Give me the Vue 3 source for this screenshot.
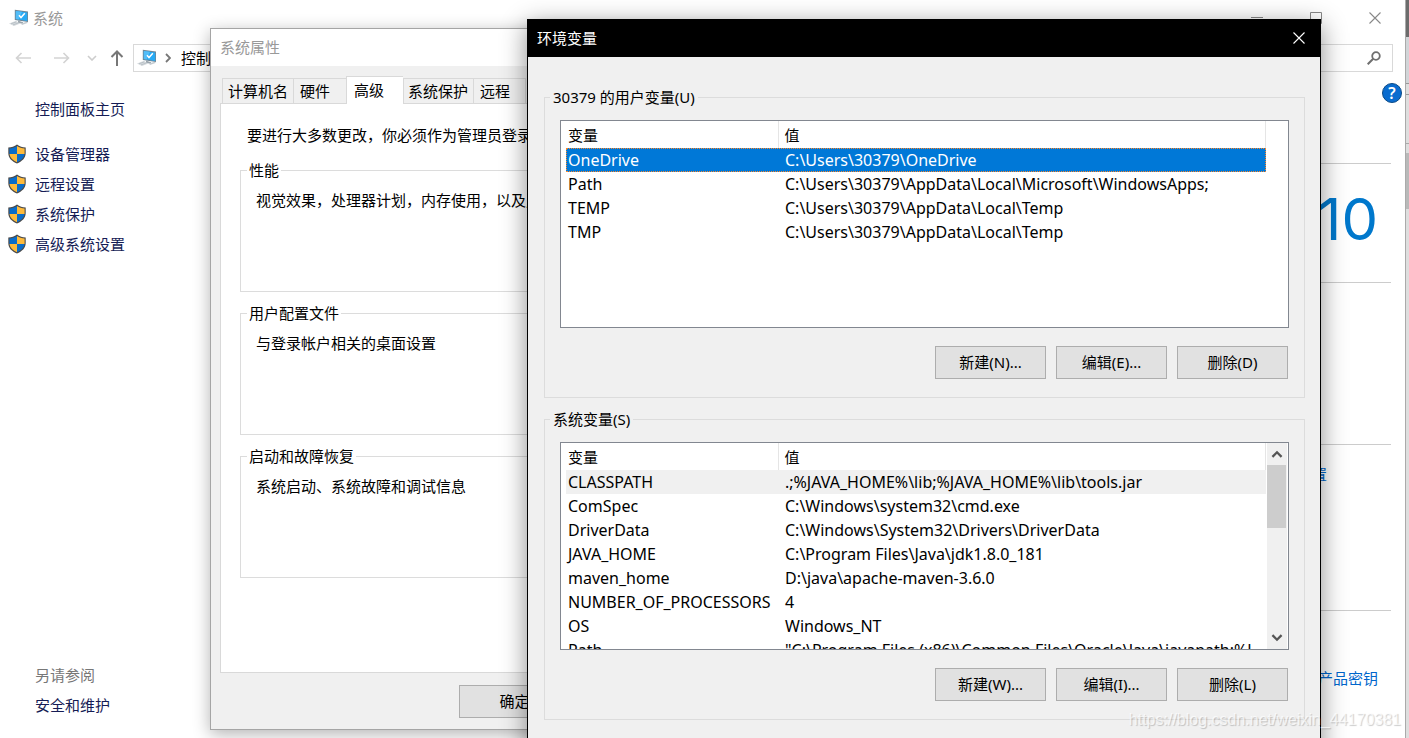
<script setup>
const tasks = ['设备管理器', '远程设置', '系统保护', '高级系统设置']

const tabs = [
  { label: '计算机名', size: 'wide' },
  { label: '硬件', size: 'narrow' },
  { label: '高级', size: 'active' },
  { label: '系统保护', size: 'wide' },
  { label: '远程', size: 'narrow' },
]

const settings = [
  { title: '性能', text: '视觉效果，处理器计划，内存使用，以及虚' },
  { title: '用户配置文件', text: '与登录帐户相关的桌面设置' },
  { title: '启动和故障恢复', text: '系统启动、系统故障和调试信息' },
]

const groups = [
  {
    title: '30379 的用户变量(U)',
    scroll: false,
    rows: [
      { name: 'OneDrive', value: 'C:\\Users\\30379\\OneDrive', state: 'selected' },
      { name: 'Path', value: 'C:\\Users\\30379\\AppData\\Local\\Microsoft\\WindowsApps;' },
      { name: 'TEMP', value: 'C:\\Users\\30379\\AppData\\Local\\Temp' },
      { name: 'TMP', value: 'C:\\Users\\30379\\AppData\\Local\\Temp' },
    ],
    buttons: ['新建(N)...', '编辑(E)...', '删除(D)'],
  },
  {
    title: '系统变量(S)',
    scroll: true,
    rows: [
      { name: 'CLASSPATH', value: '.;%JAVA_HOME%\\lib;%JAVA_HOME%\\lib\\tools.jar', state: 'muted' },
      { name: 'ComSpec', value: 'C:\\Windows\\system32\\cmd.exe' },
      { name: 'DriverData', value: 'C:\\Windows\\System32\\Drivers\\DriverData' },
      { name: 'JAVA_HOME', value: 'C:\\Program Files\\Java\\jdk1.8.0_181' },
      { name: 'maven_home', value: 'D:\\java\\apache-maven-3.6.0' },
      { name: 'NUMBER_OF_PROCESSORS', value: '4' },
      { name: 'OS', value: 'Windows_NT' },
      { name: 'Path', value: '"C:\\Program Files (x86)\\Common Files\\Oracle\\Java\\javapath;%J...' },
    ],
    buttons: ['新建(W)...', '编辑(I)...', '删除(L)'],
  },
]
</script>

<template>
  <div class="desktop">
    <svg class="defs" aria-hidden="true">
      <symbol id="pc" viewBox="0 0 20 18">
        <path d="M0 14.500 6.500 12 12 14.300 5 17z" fill="#d5dade" />
        <path d="M2 14.800 7.500 12.800M4 15.900 9.500 13.900" stroke="#aeb6bc" stroke-width=".7" />
        <path d="M9 11.500 14 13.200 14 15 9 13.500z" fill="#9aa5ad" />
        <path d="M12 14.500 18.500 12.500 18.500 14 13 16z" fill="#c5ccd1" />
        <path d="M5.800.800 19 2.500 19 13 5.800 11z" fill="#6f8797" />
        <path d="M6.800 1.900 18.200 3.400 18.200 12 6.800 10.100z" fill="#27aaf5" />
        <path d="M6.800 1.900 13 2.800 9.500 10.500 6.800 10.100z" fill="#52bdf8" />
        <path d="m10 6.300 2 2.300 3.800-4.300" fill="none" stroke="#fff" stroke-width="1.500" />
      </symbol>
      <symbol id="shield" viewBox="0 0 20 20">
        <path d="M10 .600C7.500 2.800 4.500 3.300 1.300 3.400V9C1.300 14 5 17.500 10 19.500 15 17.500 18.700 14 18.700 9V3.400C15.500 3.300 12.500 2.800 10 .600z" fill="#4a4a4a" />
        <path d="M10 2.100V10H2.400V4.500C5.300 4.300 7.800 3.700 10 2.100z" fill="#0a6dcb" />
        <path d="M10 2.100V10H17.600V4.500C14.700 4.300 12.200 3.700 10 2.100z" fill="#ffbb3c" />
        <path d="M10 10V18.200C6 16.500 3 13.800 2.500 10z" fill="#ffbb3c" />
        <path d="M10 10V18.200C14 16.500 17 13.800 17.500 10z" fill="#0a6dcb" />
      </symbol>
      <symbol id="close" viewBox="0 0 12 12">
        <path d="M.500.500 11.500 11.500M11.500.500.500 11.500" fill="none" stroke="currentColor" stroke-width="1.100" />
      </symbol>
    </svg>

    <div class="system">
      <header class="titlebar">
        <svg class="pc"><use href="#pc" /></svg>
        <span>系统</span>
        <div class="controls">
          <button aria-label="最小化"><svg viewBox="0 0 12 12"><path d="M0 5.500H12" stroke="currentColor" /></svg></button>
          <button aria-label="最大化"><svg viewBox="0 0 12 12"><path d="M.500.500H11.500V11.500H.500z" fill="none" stroke="currentColor" /></svg></button>
          <button aria-label="关闭"><svg><use href="#close" /></svg></button>
        </div>
      </header>

      <nav class="navbar">
        <button class="nav-btn" aria-label="后退"><svg width="16" height="12" viewBox="0 0 16 12"><path d="M16 6H1.500M6.500 1 1.500 6 6.500 11" fill="none" stroke="#d3d3d3" stroke-width="1.600" /></svg></button>
        <button class="nav-btn" aria-label="前进"><svg width="16" height="12" viewBox="0 0 16 12"><path d="M0 6H14.500M9.500 1 14.500 6 9.500 11" fill="none" stroke="#d3d3d3" stroke-width="1.600" /></svg></button>
        <button class="nav-btn recent" aria-label="最近位置"><svg width="10" height="6" viewBox="0 0 10 6"><path d="M1 1 5 5 9 1" fill="none" stroke="#cdcdcd" stroke-width="1.600" /></svg></button>
        <button class="nav-btn up" aria-label="上移"><svg width="14" height="16" viewBox="0 0 14 16"><path d="M7 16V1.500M1.500 7 7 1.500 12.500 7" fill="none" stroke="#777" stroke-width="2" /></svg></button>
        <div class="address">
          <svg class="pc"><use href="#pc" /></svg>
          <svg class="crumb" width="6" height="10" viewBox="0 0 6 10"><path d="M1 1 5 5 1 9" fill="none" stroke="#777" stroke-width="1.800" /></svg>
          <span>控制</span>
        </div>
        <div class="search">
          <input type="text" aria-label="搜索" />
          <svg width="14" height="14" viewBox="0 0 14 14"><circle cx="9" cy="5" r="3.800" fill="none" stroke="#6f6f6f" stroke-width="1.800" /><path d="M6.200 7.800.700 13.300" stroke="#6f6f6f" stroke-width="2" /></svg>
        </div>
      </nav>

      <div class="body">
        <aside class="sidebar">
          <a href="#" class="home">控制面板主页</a>
          <a v-for="t in tasks" :key="t" href="#"><svg><use href="#shield" /></svg>{{ t }}</a>
          <p class="also">另请参阅</p>
          <a href="#" class="plain">安全和维护</a>
        </aside>
        <main class="info">
          <div class="help"><button aria-label="帮助">?</button></div>
          <section class="brand">10</section>
          <section class="specs"></section>
          <section class="name"><a href="#">置</a></section>
          <section class="activation"><a href="#">产品密钥</a></section>
        </main>
      </div>
    </div>

    <div class="behind"><i class="dark"></i><i class="bar"></i><i class="row"></i><i class="gap"></i><i class="thumb"></i></div>

    <div class="props">
      <header>系统属性</header>
      <div class="tabs" role="tablist">
        <button v-for="t in tabs" :key="t.label" role="tab" :class="t.size">{{ t.label }}</button>
      </div>
      <div class="panel">
        <p>要进行大多数更改，你必须作为管理员登录</p>
        <fieldset v-for="s in settings" :key="s.title">
          <legend>{{ s.title }}</legend>
          {{ s.text }}
        </fieldset>
      </div>
      <footer><button class="btn">确定</button></footer>
    </div>

    <div class="env">
      <header>
        <span>环境变量</span>
        <button aria-label="关闭"><svg><use href="#close" /></svg></button>
      </header>
      <div class="groups">
        <fieldset v-for="g in groups" :key="g.title">
          <legend>{{ g.title }}</legend>
          <div class="list">
            <table>
              <thead><tr><th class="key">变量</th><th>值</th></tr></thead>
              <tbody>
                <tr v-for="r in g.rows" :key="r.name" :class="r.state"><td>{{ r.name }}</td><td>{{ r.value }}</td></tr>
              </tbody>
            </table>
            <div v-if="g.scroll" class="scrollbar">
              <button aria-label="向上滚动"><svg viewBox="0 0 10 7"><path d="M1 6 5 2 9 6" /></svg></button>
              <div class="thumb"></div>
              <button aria-label="向下滚动"><svg viewBox="0 0 10 7"><path d="M1 1 5 5 9 1" /></svg></button>
            </div>
          </div>
          <div class="actions"><button v-for="b in g.buttons" :key="b" class="btn">{{ b }}</button></div>
        </fieldset>
      </div>
    </div>

    <div class="watermark">https://blog.csdn.net/weixin_44170381</div>
  </div>
</template>

<style>
body { margin: 0; overflow: hidden; }
</style>

<style scoped>
.desktop {
  position: relative;
  display: flex;
  height: 100vh;
  overflow: hidden;
  background: #fff;
  color: #000;
  font: 15px/20px "Noto Sans", "Noto Sans CJK SC", sans-serif;
}
.desktop * { box-sizing: border-box; }
button { padding: 0; border: 0; background: none; font: inherit; color: inherit; }
a { text-decoration: none; }
p { margin: 0; }
svg { flex: none; }
.defs { position: absolute; width: 0; height: 0; }
.pc { width: 20px; height: 18px; }

.system { flex: 1; min-width: 0; display: flex; flex-direction: column; background: #fff; }
.titlebar { display: flex; align-items: center; height: 36px; padding: 0 1px 0 9px; gap: 4px; color: #999; }
.controls { display: flex; margin-left: auto; color: #888; }
.controls button { display: flex; align-items: center; justify-content: center; width: 59px; height: 36px; }
.controls svg { width: 12px; height: 12px; }
.navbar { display: flex; padding: 8px 12px 7px 3px; }
.nav-btn { display: flex; align-items: center; justify-content: center; width: 39px; height: 28px; }
.nav-btn.recent { width: 22px; }
.nav-btn.up { width: 28px; }
.address { flex: 1; display: flex; align-items: center; border: 1px solid #d9d9d9; padding-left: 3px; margin-left: 2px; }
.crumb { margin: 0 10px 0 8px; }
.search { display: flex; align-items: center; width: 280px; margin-left: 12px; padding-right: 11px; border: 1px solid #d9d9d9; }
.search input { flex: 1; min-width: 0; height: 20px; border: 0; outline: 0; background: none; font: inherit; }

.body { flex: 1; display: flex; }
.sidebar { display: flex; flex-direction: column; width: 210px; padding: 15px 0 18px 7px; line-height: 30px; }
.sidebar a { display: flex; align-items: center; gap: 8px; color: #151c55; }
.sidebar svg { width: 20px; height: 20px; }
.sidebar .home { margin-bottom: 15px; padding-left: 28px; }
.sidebar .also { margin-top: auto; padding-left: 28px; color: #777; }
.sidebar .plain { padding-left: 28px; }
.info { flex: 1; padding-right: 14px; }
.info section { display: flex; justify-content: flex-end; border-top: 1px solid #ccc; }
.info a { color: #0066cc; }
.help { display: flex; justify-content: flex-end; height: 84px; padding-top: 4px; margin-right: -11px; }
.help button { width: 20px; height: 20px; border: 1px solid #0b4a86; border-radius: 50%; background: #0a6ccf; color: #fff; font-size: 16px; font-weight: 600; line-height: 18px; }
.info .brand { align-items: center; height: 119px; padding: 0 13px 8px 0; color: #0078cc; font: 400 58px/80px Inter, sans-serif; }
.specs { height: 162px; }
.info .name { height: 166px; padding: 19px 64px 0 0; }
.info .activation { padding: 57px 13px 0 0; }

.behind { display: flex; flex-direction: column; width: 4px; border-left: 1px solid #aaa; background: #dedede; }
.behind .dark { height: 37px; background: #6c6c6c; }
.behind .bar { height: 46px; background: #d2d5d8; }
.behind .row { height: 12px; border: solid #999; border-width: 1px 0; }
.behind .gap { height: 49px; border-bottom: 1px solid #aaa; }
.behind .thumb { height: 56px; margin-top: 9px; background: #b9b9b9; }

.props {
  position: absolute;
  top: 28px;
  left: 210px;
  width: 540px;
  border: 1px solid #a5a5a5;
  background: #f0f0f0;
  box-shadow: 0 4px 16px rgba(0, 0, 0, .3);
  white-space: nowrap;
}
.props header { height: 37px; padding-left: 9px; background: #fff; color: #999; line-height: 36px; }
.tabs { display: flex; align-items: flex-end; height: 37px; padding-left: 11px; }
.tabs button { height: 25px; padding: 0 5px; border: 1px solid #d9d9d9; border-right-width: 0; border-bottom: 0; text-align: left; }
.tabs .wide { width: 71px; }
.tabs .narrow { width: 53px; padding-left: 6px; }
.tabs .active { position: relative; z-index: 1; width: 57px; height: 28px; margin-bottom: -1px; padding: 0 0 2px 7px; background: #fff; }
.tabs .active + button { width: 70px; padding-left: 4px; }
.tabs button:last-child { border-right-width: 1px; }
.panel { min-height: 570px; margin: 0 9px; padding: 21px 19px 0; border: 1px solid #d9d9d9; background: #fff; }
.panel p { margin-bottom: 15px; padding-left: 7px; }
.panel fieldset { height: 132px; margin: 0 0 11px; padding: 10px 15px; border: 1px solid #dcdcdc; }
.panel legend { margin-left: -9px; padding: 0 2px; }
.props footer { padding: 12px 0 11px 248px; }

.btn { width: 111px; height: 33px; padding-bottom: 2px; border: 1px solid #adadad; background: #e1e1e1; }

.env {
  position: absolute;
  top: 19px;
  right: 88px;
  bottom: -20px;
  left: 527px;
  border: 1px solid #000;
  background: #f0f0f0;
  box-shadow: 0 6px 24px rgba(0, 0, 0, .45);
}
.env header { display: flex; align-items: center; justify-content: space-between; height: 37px; padding: 0 15px 1px 9px; background: #000; color: #fff; }
.env header button { display: flex; }
.env header svg { width: 12px; height: 12px; }
.groups { padding: 30px 15px 0 16px; }
.groups fieldset { min-width: 0; margin: 0 0 11px; padding: 13px 16px 18px 15px; border: 1px solid #dcdcdc; }
.groups legend { margin-left: -10px; padding: 0 3px; }
.list { display: flex; height: 208px; margin-right: -1px; padding: 0 1px 0 5px; border: 1px solid #828790; background: #fff; overflow: hidden; }
table { flex: 1; align-self: flex-start; min-width: 0; margin-right: 21px; border-collapse: collapse; table-layout: fixed; }
.list:has(.scrollbar) table { margin-right: 1px; }
th, td { height: 24px; padding: 0 0 0 7px; overflow: hidden; font-weight: 400; text-align: left; text-overflow: ellipsis; white-space: nowrap; }
td { font-size: 16px; }
th { height: 27px; padding-left: 6px; border-right: 1px solid #e5e5e5; }
.key { width: 212px; }
th:first-child, td:first-child { padding-left: 2px; }
.selected { background: #0078d7; color: #fff; outline: 1px dotted #ff8728; outline-offset: -1px; }
.muted { background: #f0f0f0; }
.scrollbar { display: flex; flex-direction: column; width: 20px; background: #f0f0f0; }
.scrollbar button { display: flex; align-items: center; justify-content: center; height: 22px; }
.scrollbar button:last-child { margin-top: auto; }
.scrollbar svg { width: 12px; height: 8px; fill: none; stroke: #555; stroke-width: 2px; }
.scrollbar .thumb { height: 63px; margin-right: 1px; background: #cdcdcd; }
.actions { display: flex; justify-content: flex-end; gap: 10px; margin-top: 18px; }

.watermark {
  position: absolute;
  right: 8px;
  bottom: 8px;
  color: rgba(255, 255, 255, .7);
  font: 16px/20px "Liberation Sans", sans-serif;
  text-shadow: 1px 1px 1px rgba(0, 0, 0, .2);
}
</style>
